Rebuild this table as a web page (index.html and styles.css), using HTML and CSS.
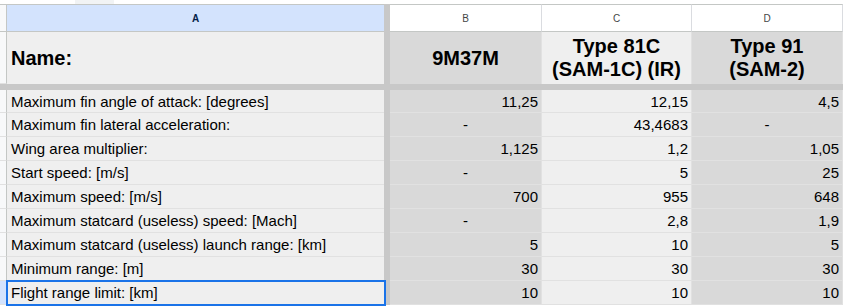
FILE: index.html
```html
<!DOCTYPE html>
<html>
<head>
<meta charset="utf-8">
<link rel="stylesheet" href="styles.css">
</head>
<body>
<div class="sheet">
  <div class="topstrip"><div class="thumb"></div></div>
  <div class="vbar"></div>
  <div class="hbar"></div>

  <div class="corner"></div>
  <div class="colhead sel">A</div>
  <div class="colhead">B</div>
  <div class="colhead">C</div>
  <div class="colhead">D</div>

  <div class="rh"></div>
  <div class="cell head colA light"><span class="title">Name:</span></div>
  <div class="cell head dark center"><span class="title">9M37M</span></div>
  <div class="cell head light center"><span class="title">Type 81C<br>(SAM-1C) (IR)</span></div>
  <div class="cell head dark center"><span class="title">Type 91<br>(SAM-2)</span></div>

  <div class="rh"></div>
  <div class="cell colA light">Maximum fin angle of attack: [degrees]</div>
  <div class="cell dark num">11,25</div>
  <div class="cell light num">12,15</div>
  <div class="cell dark num">4,5</div>

  <div class="rh"></div>
  <div class="cell colA light">Maximum fin lateral acceleration:</div>
  <div class="cell dark center">-</div>
  <div class="cell light num">43,4683</div>
  <div class="cell dark center">-</div>

  <div class="rh"></div>
  <div class="cell colA light">Wing area multiplier:</div>
  <div class="cell dark num">1,125</div>
  <div class="cell light num">1,2</div>
  <div class="cell dark num">1,05</div>

  <div class="rh"></div>
  <div class="cell colA light">Start speed: [m/s]</div>
  <div class="cell dark center">-</div>
  <div class="cell light num">5</div>
  <div class="cell dark num">25</div>

  <div class="rh"></div>
  <div class="cell colA light">Maximum speed: [m/s]</div>
  <div class="cell dark num">700</div>
  <div class="cell light num">955</div>
  <div class="cell dark num">648</div>

  <div class="rh"></div>
  <div class="cell colA light">Maximum statcard (useless) speed: [Mach]</div>
  <div class="cell dark center">-</div>
  <div class="cell light num">2,8</div>
  <div class="cell dark num">1,9</div>

  <div class="rh"></div>
  <div class="cell colA light">Maximum statcard (useless) launch range: [km]</div>
  <div class="cell dark num">5</div>
  <div class="cell light num">10</div>
  <div class="cell dark num">5</div>

  <div class="rh"></div>
  <div class="cell colA light">Minimum range: [m]</div>
  <div class="cell dark num">30</div>
  <div class="cell light num">30</div>
  <div class="cell dark num">30</div>

  <div class="rh selrow"></div>
  <div class="cell colA light active">Flight range limit: [km]<div class="selbox"></div></div>
  <div class="cell dark num">10</div>
  <div class="cell light num">10</div>
  <div class="cell dark num">10</div>
</div>
</body>
</html>
```
FILE: styles.css
```css
* { box-sizing: border-box; }
html, body { margin: 0; padding: 0; background: #ffffff; }
body {
  width: 844px;
  height: 306px;
  overflow: hidden;
  font-family: "Liberation Sans", Arial, sans-serif;
}
.sheet {
  display: grid;
  grid-template-columns: 7px 377px 6px 152px 150px 151px;
  grid-template-rows: 4px 28px 52px 6px 23px repeat(8, 24px);
}
.topstrip {
  grid-column: 1 / -1;
  grid-row: 1;
  display: flex;
  padding-left: 75px;
}
.thumb {
  width: 39px;
  height: 4px;
  background: #f1f3f4;
}
.vbar {
  grid-column: 3;
  grid-row: 2 / -1;
  background: #c8c8c8;
}
.hbar {
  grid-column: 1 / -1;
  grid-row: 4;
  background: #c8c8c8;
}
.corner {
  background: #f8f9fa;
  border-top: 1px solid #c4c7c5;
  border-bottom: 1px solid #c4c7c5;
  border-right: 1px solid #c4c7c5;
}
.colhead {
  display: flex;
  align-items: center;
  justify-content: center;
  background: #ffffff;
  border-top: 1px solid #c4c7c5;
  border-bottom: 1px solid #c4c7c5;
  border-right: 1px solid #dadce0;
  font-size: 10px;
  color: #444746;
}
.colhead.sel {
  background: #d3e3fd;
  color: #041e49;
  font-weight: bold;
  border-right: none;
}
.rh {
  background: #f8f9fa;
  border-right: 1px solid #c4c7c5;
  border-bottom: 1px solid #e1e1e1;
}
.rh.selrow { background: #d3e3fd; }
.cell {
  position: relative;
  display: flex;
  align-items: center;
  padding: 0 3px;
  font-size: 15px;
  color: #000;
  white-space: nowrap;
  border-right: 1px solid #e1e1e1;
  border-bottom: 1px solid #e1e1e1;
}
.cell.colA { border-right: none; padding-left: 4px; }
.light { background: #efefef; }
.dark { background: #d9d9d9; }
.num { justify-content: flex-end; }
.center { justify-content: center; }
.cell.head { border-bottom: none; }
.title {
  font-size: 20px;
  font-weight: bold;
  line-height: 23px;
  text-align: center;
}
.selbox {
  position: absolute;
  top: -1px;
  left: -1px;
  right: -2px;
  bottom: -2px;
  border: 2px solid #1a73e8;
  pointer-events: none;
}
```
